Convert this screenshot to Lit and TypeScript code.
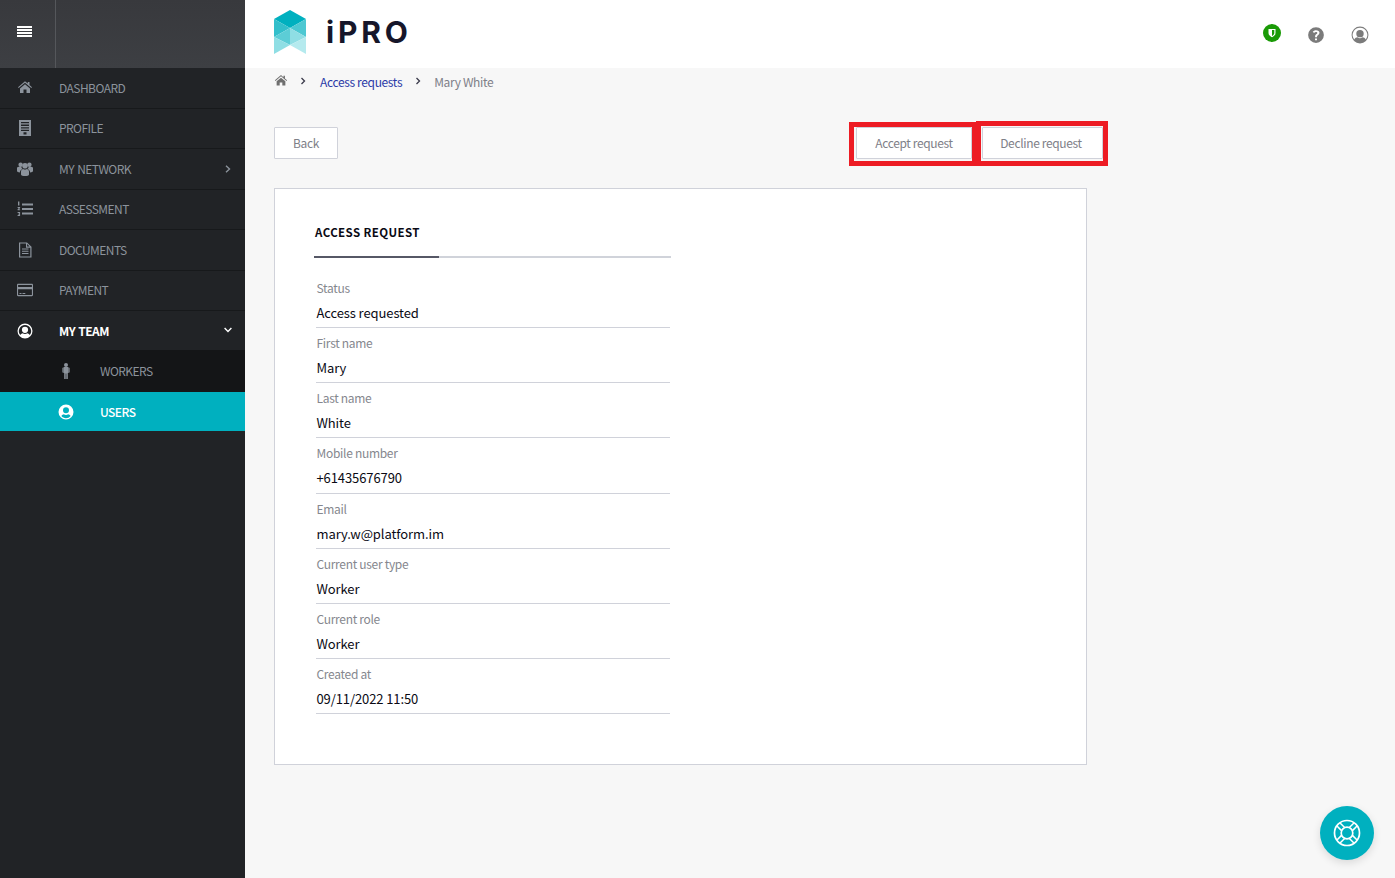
import { LitElement, html, css, svg } from "lit";
import { customElement } from "lit/decorators.js";

const icons: Record<string, any> = {
  home: svg`<path d="M8 1.2 1 7.2l.7.8L8 2.7 14.3 8l.7-.8-2.5-2.1V2h-1.700v1.600L8 1.200Z"/><path d="M3 8.400 8 4.200l5 4.200V13H9.500V9.600h-3V13H3V8.400Z"/>`,
  building: svg`<path fill-rule="evenodd" d="M2 0h12v16H2V0Zm2 2v1.300h8V2H4Zm0 2.600v1.300h8V4.600H4Zm0 2.600v1.300h8V7.200H4Zm0 2.600v1.300h8V9.800H4ZM6.500 12.300v2.200h3v-2.200h-3Z"/>`,
  users: svg`<circle cx="3.600" cy="3.800" r="2.200"/><circle cx="12.400" cy="3.800" r="2.200"/><circle cx="8" cy="4.800" r="2.800"/><path d="M0 6.600c.8-.8 2.600-1 4.300-.7.300 1 .8 1.600 1.300 2C4 8.400 3 9.600 2.900 11.500 1.200 11.300 0 10.800 0 10.100v-3.500ZM16 6.600c-.8-.8-2.600-1-4.300-.7-.3 1-.8 1.600-1.300 2 1.600.5 2.600 1.700 2.700 3.600 1.700-.2 2.900-.7 2.900-1.400v-3.500Z"/><path d="M4 10.500c0-1.600 1.300-2.600 2.200-2.600.6.400 1.100.6 1.800.6s1.200-.2 1.800-.6c.9 0 2.200 1 2.200 2.600v3C12 14.500 10 15 8 15s-4-.5-4-1.500v-3Z"/>`,
  list: svg`<path d="M5 2.500h11v2H5zM5 7h11v2H5zM5 11.500h11v2H5z"/><path d="M1 .6h1.400v3.800H1zM.6 6h2.500v1L1.800 8.200h1.300v1H.6v-1L1.900 7H.6zM.6 11h2.500v4H.6v-1h1.500v-.5H1.100v-.8h1v-.7H.6z"/>`,
  doc: svg`<path fill-rule="evenodd" d="M2 .5h8L14.500 4.700V15.500H2V.5Zm1.200 1.100v12.800h10.100V5.700H9V1.600H3.200Zm6.900.5v2.500h2.500L10.100 2.100ZM5 6.500h6.500v1H5v-1Zm0 2.300h6.500v1H5v-1Zm0 2.300h6.500v1H5v-1Z"/>`,
  card: svg`<path fill-rule="evenodd" d="M1.200 1.800h13.600c.7 0 1.200.5 1.200 1.200v10c0 .7-.5 1.200-1.200 1.200H1.200C.5 14.200 0 13.700 0 13V3c0-.7.5-1.200 1.200-1.200Zm-.1 1.100V5h13.800V2.900H1.100ZM1.100 7.200v5.700c0 .1.100.2.200.2h13.400c.1 0 .2-.1.200-.2V7.200H1.100Zm1.400 3.800h2v1h-2v-1Zm3 0h2.800v1H5.500v-1Z"/>`,
  circleUser: svg`<path fill-rule="evenodd" d="M8 .5a7.500 7.500 0 1 0 0 15 7.500 7.500 0 0 0 0-15Zm0 1.400a6.100 6.100 0 0 1 4.700 10C12 10.800 11 10.300 10.300 10.200 9.700 10.600 8.900 10.900 8 10.900s-1.700-.3-2.300-.7C5 10.300 4 10.800 3.300 11.900A6.100 6.100 0 0 1 8 1.900Zm0 1.800a3.100 3.100 0 1 0 0 6.200 3.100 3.100 0 0 0 0-6.200Z"/>`,
  solidUser: svg`<path fill-rule="evenodd" d="M8 .5a7.500 7.500 0 1 0 0 15 7.500 7.500 0 0 0 0-15Zm0 2.800a3 3 0 1 1 0 6 3 3 0 0 1 0-6Zm0 10.900c-1.900 0-3.500-.9-4.600-2.200.6-1.100 1.600-1.600 2.500-1.700.6.400 1.300.7 2.100.7s1.500-.3 2.100-.7c.9.100 1.900.6 2.500 1.700A6 6 0 0 1 8 14.200Z"/>`,
  male: svg`<circle cx="8" cy="2" r="2"/><path d="M5.400 4.600c0-.3.300-.6.600-.6h4c.3 0 .6.300.6.600V10H9.800v6H8.300v-5.500h-.6V16H6.200v-6h-.8V4.600Z"/><path d="M4.400 4.800h1v4.700h-1zM10.600 4.800h1v4.700h-1z"/>`
};
const icon = (n: string, cls = "") => html`<svg class="ico ${cls}" viewBox="0 0 16 16" fill="currentColor">${icons[n]}</svg>`;
const sep = html`<svg class="sep" viewBox="0 0 6 8"><path d="M1.500 1 4.500 4 1.500 7"/></svg>`;

const nav = [
  ["home", "DASHBOARD"],
  ["building", "PROFILE"],
  ["users", "MY NETWORK"],
  ["list", "ASSESSMENT"],
  ["doc", "DOCUMENTS"],
  ["card", "PAYMENT"]
];
const fields = [
  ["Status", "Access requested"],
  ["First name", "Mary"],
  ["Last name", "White"],
  ["Mobile number", "+61435676790"],
  ["Email", "mary.w@platform.im"],
  ["Current user type", "Worker"],
  ["Current role", "Worker"],
  ["Created at", "09/11/2022 11:50"]
];

@customElement("app-root")
export class AppRoot extends LitElement {
  static styles = css`
    :host { display: flex; width: 100%; height: 100vh; min-height: 878px; overflow: hidden; position: relative;
      font-family: "Noto Sans CJK JP", "Noto Sans", sans-serif; background: #f7f7f7; }
    .side { width: 245px; flex: none; background: #212326; color: #8c939c; }
    .top { height: 68px; display: flex; background: linear-gradient(#38393d, #3d3f43); }
    .burger { width: 49px; padding: 0 6px 5px 0; border-right: 1px solid #55575b; display: flex; flex-direction: column; justify-content: center; align-items: center; gap: 1px; box-sizing: content-box; }
    .burger i { display: block; width: 15px; height: 2px; background: #fff; }
    .row { height: 40.500px; box-sizing: border-box; border-bottom: 1px solid #17191b; padding-bottom: 1px; display: flex; align-items: center; font-size: 12px; letter-spacing: -.55px; word-spacing: 1px; position: relative; }
    .row .icw { width: 59px; flex: none; display: flex; justify-content: center; padding-right: 10px; margin-top: 1px; box-sizing: border-box; }
    .ico { width: 16px; height: 16px; display: block; }
    .row .lbl { flex: 1; }
    .chev { width: 8px; height: 8px; position: absolute; right: 13px; top: 16px; fill: none; stroke: currentColor; stroke-width: 1.400; }
    .active { color: #fff; font-weight: 700; border-bottom: 0; height: 39px; padding-bottom: 0; }
    .active .icw { margin-top: 0; }
    .active .chev { top: 15px; }
    .sub { background: #141517; height: 42px; border: 0; }
    .sub .icw, .cur .icw { width: 100px; padding: 0 0 0 58px; justify-content: flex-start; }
    .sub .icw { margin-top: 0; }
    .cur { background: #00b0bf; color: #fff; height: 39px; border: 0; font-weight: 500; }
    .main { flex: 1; min-width: 0; display: flex; flex-direction: column; }
    .hdr { height: 68px; background: #fff; display: flex; align-items: center; padding: 0 26px 0 29px; flex: none; box-sizing: border-box; }
    .logo { display: flex; align-items: center; gap: 20px; flex: 1; padding-bottom: 4px; }
    .logo svg { width: 32px; height: 44px; display: block; }
    .brand { font-family: "Inter", sans-serif; font-weight: 700; font-size: 30px; letter-spacing: 3.800px; color: #16162a; line-height: 1; }
    .tools { display: flex; align-items: center; gap: 26px; padding-top: 2px; }
    .tools svg { width: 18px; height: 18px; display: block; }
    .shield { width: 18px; height: 18px; border-radius: 50%; background: #1a9a06; display: flex; align-items: center; justify-content: center; margin-top: -4px; }
    .shield svg { width: 10px; height: 10px; }
    .grey { color: #7b7b7b; }
    .content { padding: 5px 29px 0; position: relative; flex: 1; }
    .crumb { display: flex; align-items: center; font-size: 12px; letter-spacing: -.35px; height: 18px; color: #7e8088; padding-bottom: 2px; box-sizing: border-box; }
    .crumb .ico { width: 14px; height: 14px; color: #6f6f6f; }
    .crumb .sep { width: 6px; height: 8px; fill: none; stroke: #3a3a4a; stroke-width: 1.300; margin: 0 13px 0 13px; }
    .crumb .ico + .sep { margin: 0 14px 0 12px; }
    .crumb a { color: #2b3aa8; }
    .acts { display: flex; align-items: center; margin-top: 36px; height: 32px; }
    .btn { height: 32px; padding-bottom: 2px; box-sizing: border-box; border: 1px solid #d0d2da; background: #fff; border-radius: 1px; font-size: 12px; letter-spacing: -.35px; color: #7e8088; display: flex; align-items: center; justify-content: center; }
    .back { width: 64px; }
    .accept { width: 116px; margin-left: 518px; }
    .decline { width: 121px; margin-left: 10px; padding-right: 3px; }
    .mark { position: absolute; border: 5px solid #ed1c24; box-sizing: border-box; pointer-events: none; }
    .m1 { left: 604px; top: 54px; width: 128px; height: 44px; }
    .m2 { left: 731px; top: 53px; width: 132px; height: 45px; }
    .card { width: 813px; height: 577px; box-sizing: border-box; margin-top: 29px; border: 1px solid #d0d2da; background: #fff; padding: 35px 40px 0 39px; }
    .tab { width: 357px; height: 32px; border-bottom: 2px solid #d0d3da; position: relative; font-weight: 700; font-size: 11.500px; letter-spacing: .4px; color: #0a0a14; line-height: 16px; box-sizing: content-box; }
    .tab span { margin-left: 1px; }
    .tab::after { content: ""; position: absolute; left: 0; bottom: -2px; width: 125px; height: 2px; background: #565866; }
    .fields { margin: 21px 0 0 2px; width: 354px; }
    .f { height: 55.200px; box-sizing: border-box; border-bottom: 1px solid #d0d2da; display: flex; flex-direction: column; }
    .f label { font-size: 12px; letter-spacing: -.3px; color: #85878e; line-height: 18px; height: 18px; margin-top: 6px; padding-left: .5px; }
    .f div { font-size: 13px; letter-spacing: -.1px; color: #0a0a14; line-height: 20px; margin-top: 6px; padding-left: .5px; }
    .fields .f:first-child { height: 49px; }
    .fields .f:first-child label { margin-top: 0; }
    .fab { position: absolute; right: 21px; bottom: 18px; width: 54px; height: 54px; border-radius: 50%; background: #00b0bf; box-shadow: 0 3px 8px rgba(0,0,0,.12); display: flex; align-items: center; justify-content: center; }
    .fab svg { width: 28px; height: 28px; fill: none; stroke: #fff; stroke-width: 1.700; }
  `;

  render() {
    return html`
      <aside class="side">
        <div class="top"><div class="burger"><i></i><i></i><i></i><i></i></div></div>
        ${nav.map(([ic, l]) => html`<div class="row"><span class="icw">${icon(ic)}</span><span class="lbl">${l}</span>
          ${l === "MY NETWORK" ? html`<svg class="chev" viewBox="0 0 8 8"><path d="M2 .8 5.500 4 2 7.200"/></svg>` : ""}</div>`)}
        <div class="row active"><span class="icw">${icon("circleUser")}</span><span class="lbl">MY TEAM</span>
          <svg class="chev" viewBox="0 0 8 8"><path d="M.6 2 4 5.500 7.400 2"/></svg></div>
        <div class="row sub"><span class="icw">${icon("male")}</span><span class="lbl">WORKERS</span></div>
        <div class="row cur"><span class="icw">${icon("solidUser")}</span><span class="lbl">USERS</span></div>
      </aside>
      <div class="main">
        <header class="hdr">
          <div class="logo">
            <svg viewBox="0 0 32 44">
              <polygon points="16,0 32,9 16,18 0,9" fill="#00b0bf"/>
              <polygon points="0,9 16,18 0,27" fill="#33bfcb"/>
              <polygon points="32,9 16,18 32,27" fill="#4dc8d2"/>
              <polygon points="0,27 16,18 16,35" fill="#5ccdd6"/>
              <polygon points="32,27 16,18 16,35" fill="#8fdee4"/>
              <polygon points="0,27 16,35 0,44" fill="#8fdee4"/>
              <polygon points="32,27 16,35 32,44" fill="#b5eaee"/>
            </svg>
            <span class="brand">iPRO</span>
          </div>
          <div class="tools">
            <span class="shield"><svg viewBox="0 0 10 10"><path d="M1.500 1h7v4c0 2-1.800 3.500-3.500 4.200C3.300 8.500 1.500 7 1.500 5V1Z" fill="#fff"/><path d="M5 2v6c1.200-.7 2.300-1.800 2.300-3V2H5Z" fill="#1a9a06"/></svg></span>
            <svg class="grey" viewBox="0 0 16 16"><path fill="currentColor" fill-rule="evenodd" d="M8 1a7 7 0 1 0 0 14A7 7 0 0 0 8 1Zm-.9 10h1.800v1.700H7.100V11Zm1.800-1.100H7.200V9c0-1.600 2-1.700 2-2.800 0-.5-.5-.9-1.200-.9-.7 0-1.300.4-1.700 1L5.100 5.200C5.800 4.200 6.800 3.700 8.100 3.700c1.700 0 3 .9 3 2.400 0 1.900-2.200 2.100-2.200 3.400v.4Z"/></svg>
            <svg class="grey" viewBox="0 0 16 16"><path fill="currentColor" fill-rule="evenodd" d="M8 .5a7.500 7.500 0 1 0 0 15 7.500 7.500 0 0 0 0-15Zm0 1a6.500 6.500 0 0 1 5.100 10.500c-.7-1.200-1.800-1.800-2.800-1.900-.6.500-1.400.8-2.300.8s-1.700-.3-2.300-.8c-1 .1-2.100.7-2.800 1.900A6.500 6.500 0 0 1 8 1.500Zm0 2a3.300 3.300 0 1 0 0 6.600 3.300 3.300 0 0 0 0-6.600Z"/></svg>
          </div>
        </header>
        <div class="content">
          <nav class="crumb">${icon("home")}${sep}<a>Access requests</a>${sep}<span>Mary White</span></nav>
          <div class="acts">
            <div class="btn back">Back</div>
            <div class="btn accept">Accept request</div>
            <div class="btn decline">Decline request</div>
          </div>
          <div class="mark m1"></div><div class="mark m2"></div>
          <section class="card">
            <div class="tab"><span>ACCESS REQUEST</span></div>
            <div class="fields">
              ${fields.map(([l, v]) => html`<div class="f"><label>${l}</label><div>${v}</div></div>`)}
            </div>
          </section>
        </div>
        <div class="fab"><svg viewBox="0 0 28 28">
          <circle cx="14" cy="14" r="12.500"/><circle cx="14" cy="14" r="5.800"/>
          <path d="M11.650 8.550 7.050 3.950M8.550 11.650 3.950 7.050M16.350 8.550l4.600-4.600M19.450 11.650l4.600-4.600M11.650 19.450l-4.600 4.600M8.550 16.350l-4.600 4.600M16.350 19.450l4.600 4.600M19.450 16.350l4.600 4.600" stroke-width="1.500"/>
        </svg></div>
      </div>
    `;
  }
}
